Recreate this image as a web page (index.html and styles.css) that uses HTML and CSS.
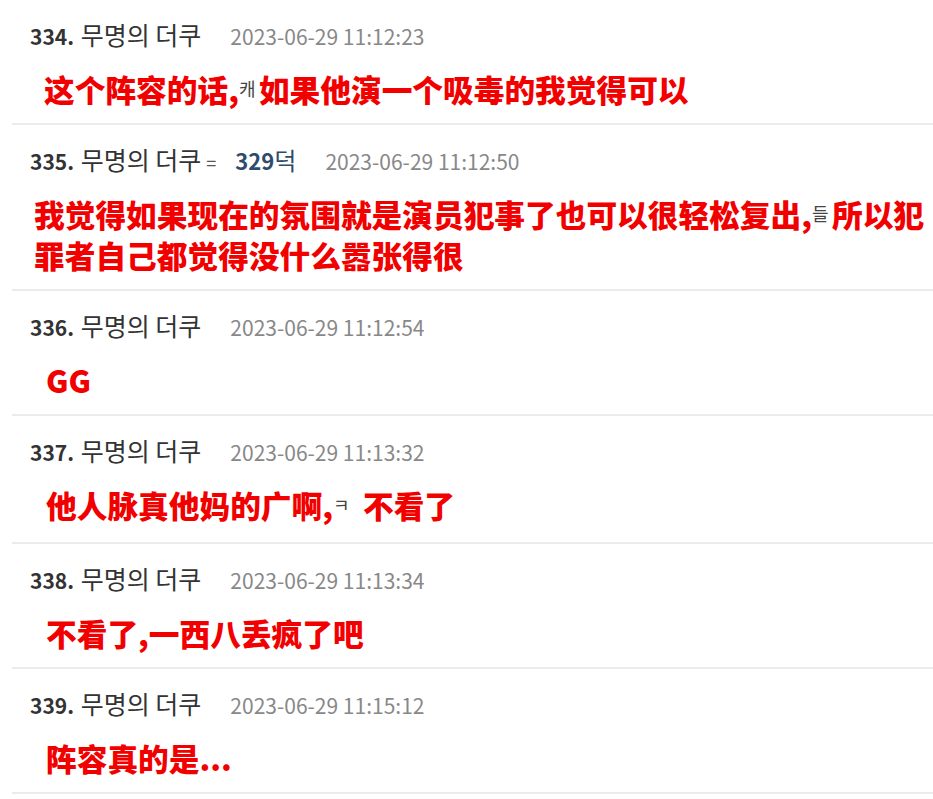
FILE: index.html
```html
<!DOCTYPE html>
<html>
<head>
  <meta charset="UTF-8">
  <title>댓글</title>
  <link rel="stylesheet" href="styles.css">
</head>
<body>
<div class="comments">
  <div class="item">
    <div class="head"><b class="num">334.</b> <span class="nick">무명의 더쿠</span><span class="date">2023-06-29 11:12:23</span></div>
    <div class="body first">这个阵容的话,<span class="ko">캐</span>如果他演一个吸毒的我觉得可以</div>
  </div>
  <div class="item">
    <div class="head"><b class="num">335.</b> <span class="nick">무명의 더쿠</span><span class="eq">=</span><b class="ref">329</b><span class="ref-dk">덕</span><span class="date">2023-06-29 11:12:50</span></div>
    <div class="body wide">我觉得如果现在的氛围就是演员犯事了也可以很轻松复出,<span class="ko">들</span>所以犯<br>罪者自己都觉得没什么嚣张得很</div>
  </div>
  <div class="item">
    <div class="head"><b class="num">336.</b> <span class="nick">무명의 더쿠</span><span class="date">2023-06-29 11:12:54</span></div>
    <div class="body">GG</div>
  </div>
  <div class="item tall">
    <div class="head"><b class="num">337.</b> <span class="nick">무명의 더쿠</span><span class="date">2023-06-29 11:13:32</span></div>
    <div class="body">他人脉真他妈的广啊,<span class="ko gap">ㅋ</span>不看了</div>
  </div>
  <div class="item">
    <div class="head"><b class="num">338.</b> <span class="nick">무명의 더쿠</span><span class="date">2023-06-29 11:13:34</span></div>
    <div class="body">不看了,一西八丢疯了吧</div>
  </div>
  <div class="item">
    <div class="head"><b class="num">339.</b> <span class="nick">무명의 더쿠</span><span class="date">2023-06-29 11:15:12</span></div>
    <div class="body">阵容真的是...</div>
  </div>
</div>
</body>
</html>
```

FILE: styles.css
```css
html, body {
  margin: 0;
  padding: 0;
  background: #fff;
}

body {
  font-family: "Noto Sans CJK KR", "Noto Sans", sans-serif;
}

.comments {
  width: 933px;
}

.item {
  margin-left: 12px;
  padding: 19px 0 14px 18px;
  border-bottom: 2px solid #ebebeb;
}

.item.tall {
  padding-bottom: 17px;
}

.head {
  height: 30px;
  line-height: 30px;
  font-size: 21px;
  color: #333;
  white-space: nowrap;
}

.head .num {
  font-weight: bold;
  color: #333;
}

.head .nick {
  font-size: 25px;
  margin-left: 2px;
}

.head .eq {
  color: #555;
  font-size: 18px;
  margin: 0 19px 0 5px;
}

.head .ref {
  font-weight: bold;
  font-size: 22px;
  color: #2f4b6c;
}

.head .ref-dk {
  font-size: 24px;
  color: #2f4b6c;
}

.head .date {
  margin-left: 29px;
  font-size: 21px;
  color: #888;
}

.body {
  margin-top: 19px;
  padding-left: 16px;
  line-height: 41px;
  font-family: "Noto Sans CJK SC", "Noto Sans", sans-serif;
  font-size: 30.7px;
  font-weight: 900;
  color: #f20000;
  white-space: nowrap;
}

.body.first {
  padding-left: 14px;
}

.body.wide {
  padding-left: 4px;
}

.body .ko {
  display: inline-block;
  width: 20px;
  font-family: "Noto Sans CJK KR", sans-serif;
  font-size: 18px;
  font-weight: normal;
  color: #444;
  vertical-align: top;
}

.body .ko.gap {
  width: 30px;
}
```
